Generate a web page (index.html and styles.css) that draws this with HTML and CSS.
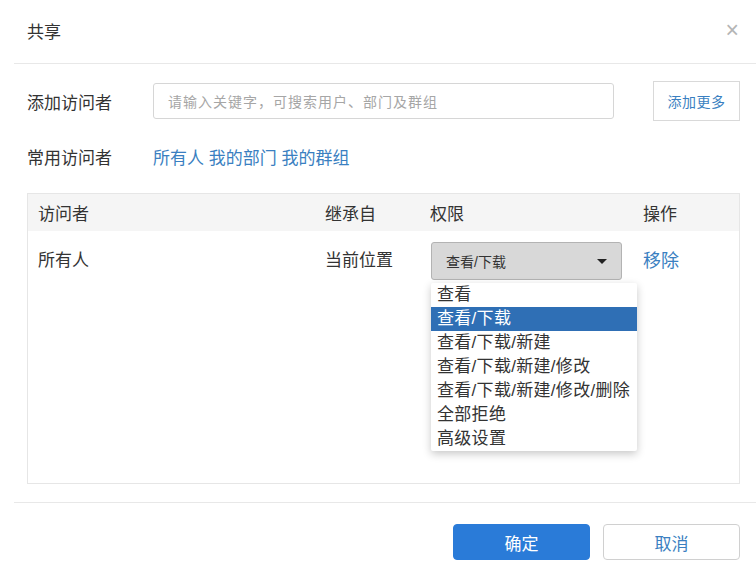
FILE: index.html
```html
<!DOCTYPE html>
<html lang="zh-CN">
<head>
  <meta charset="UTF-8" />
  <title>共享</title>
  <link rel="stylesheet" href="styles.css">
</head>
<body>
  <div class="dialog">
    <header class="dialog-header">
      <span class="dialog-title">共享</span>
      <span class="close">×</span>
    </header>

    <main class="dialog-body">
      <div class="form-row">
        <label class="form-label">添加访问者</label>
        <div class="search-input">请输入关键字，可搜索用户、部门及群组</div>
        <button class="btn-more">添加更多</button>
      </div>
      <div class="form-row common">
        <span class="form-label">常用访问者</span>
        <div class="quick-links">
          <a>所有人</a> <a>我的部门</a> <a>我的群组</a>
        </div>
      </div>

      <div class="visitor-table">
        <div class="table-row table-head">
          <span>访问者</span>
          <span>继承自</span>
          <span>权限</span>
          <span>操作</span>
        </div>
        <div class="table-row">
          <span>所有人</span>
          <span>当前位置</span>
          <div class="perm-cell">
            <div class="perm-select">
              <span>查看/下载</span>
              <i class="caret"></i>
            </div>
            <ul class="perm-menu">
              <li>查看</li>
              <li class="active">查看/下载</li>
              <li>查看/下载/新建</li>
              <li>查看/下载/新建/修改</li>
              <li>查看/下载/新建/修改/删除</li>
              <li>全部拒绝</li>
              <li>高级设置</li>
            </ul>
          </div>
          <a class="remove">移除</a>
        </div>
      </div>
    </main>

    <footer class="dialog-footer">
      <button class="btn btn-primary">确定</button>
      <button class="btn btn-default">取消</button>
    </footer>
  </div>
</body>
</html>
```

FILE: styles.css
```css
:root {
  --text: #333;
  --blue: #3a7fc1;
  --line: #e8e8e8;
}

* {
  box-sizing: border-box;
}

html, body {
  margin: 0;
  background: #fff;
}

body {
  font-family: "Liberation Sans", "Noto Sans CJK SC", sans-serif;
  color: var(--text);
  font-size: 17px;
}

.dialog {
  width: 756px;
  padding-left: 14px;
}

/* Header */

.dialog-header {
  height: 64px;
  display: flex;
  align-items: center;
  justify-content: space-between;
  padding: 0 17px 2px 13px;
  border-bottom: 1px solid var(--line);
}

.dialog-title {
  font-size: 17px;
}

.close {
  color: #b5b5b5;
  font-size: 23px;
  line-height: 1;
}

/* Body */

.dialog-body {
  padding: 17px 16px 18px 13px;
  border-bottom: 1px solid var(--line);
}

.form-row {
  display: flex;
  align-items: center;
  height: 40px;
}

.form-row.common {
  height: 36px;
  margin-top: 17px;
  margin-bottom: 19px;
}

.form-label {
  width: 126px;
  flex-shrink: 0;
}

.search-input {
  width: 461px;
  height: 36px;
  border: 1px solid #d6d6d6;
  border-radius: 3px;
  padding-left: 14px;
  display: flex;
  align-items: center;
  font-size: 14px;
  color: #a6a6a6;
  letter-spacing: 1px;
}

.btn-more {
  margin-left: auto;
  width: 87px;
  height: 40px;
  border: 1px solid #d9d9d9;
  background: #fff;
  color: var(--blue);
  font-family: inherit;
  font-size: 14px;
  letter-spacing: 0.5px;
}

.quick-links a {
  color: var(--blue);
}

/* Table */

.visitor-table {
  border: 1px solid #e6e6e6;
  height: 291px;
}

.table-row {
  display: grid;
  grid-template-columns: 287px 105px 213px 1fr;
  padding-left: 10px;
}

.table-head {
  background: #f5f5f5;
  height: 37px;
  align-items: center;
}

.table-row:not(.table-head) {
  padding-top: 11px;
  align-items: start;
}

.table-row:not(.table-head) > span,
.remove {
  line-height: 38px;
}

.remove {
  color: var(--blue);
  font-size: 18px;
}

.perm-cell {
  position: relative;
}

.perm-select {
  width: 191px;
  height: 38px;
  margin-left: 1px;
  background: #d8d8d8;
  border: 1px solid #b3b3b3;
  border-radius: 3px;
  display: flex;
  align-items: center;
  justify-content: space-between;
  padding: 0 14px 0 14px;
  font-size: 14px;
}

.caret {
  width: 0;
  height: 0;
  border-left: 5px solid transparent;
  border-right: 5px solid transparent;
  border-top: 5px solid #222;
}

.perm-menu {
  position: absolute;
  top: 41px;
  left: 1px;
  width: 206px;
  margin: 0;
  padding: 0;
  list-style: none;
  background: #fff;
  box-shadow: 0 3px 8px rgba(0, 0, 0, 0.22);
  border-radius: 2px;
}

.perm-menu li {
  height: 24px;
  line-height: 24px;
  padding-left: 6px;
  font-size: 17px;
  letter-spacing: 0.3px;
  white-space: nowrap;
}

.perm-menu li.active {
  background: #2f6fb5;
  color: #fff;
}

/* Footer */

.dialog-footer {
  display: flex;
  justify-content: flex-end;
  gap: 13px;
  padding: 21px 16px 0 0;
}

.btn {
  width: 137px;
  height: 36px;
  border-radius: 4px;
  font-family: inherit;
  font-size: 17px;
}

.btn-primary {
  background: #2a7bd8;
  border: 1px solid #2a7bd8;
  color: #fff;
}

.btn-default {
  background: #fff;
  border: 1px solid #d0d0d0;
  color: var(--blue);
}
```
